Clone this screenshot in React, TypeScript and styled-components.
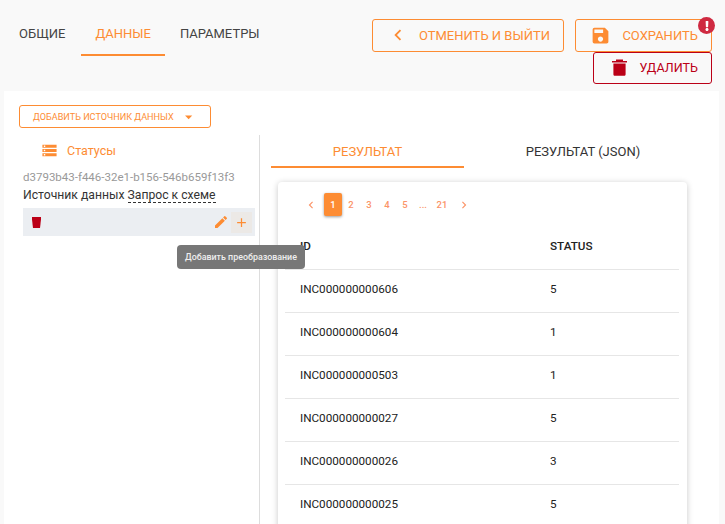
import React from "react";
import styled, { createGlobalStyle } from "styled-components";
import { MdAdd, MdArrowDropDown, MdChevronLeft, MdChevronRight, MdEdit, MdSave, MdStorage } from "react-icons/md";
import { FaExclamation } from "react-icons/fa";

const ORANGE = "#fd8c33";
const RED = "#bb0017";

const Global = createGlobalStyle`
    html, body { margin: 0; height: 524px; overflow: hidden; background: #f9f9f9; }
    body { font-family: Roboto, "Liberation Sans", sans-serif; color: #333; }
    * { box-sizing: border-box; }
`;

const Page = styled.div`
    width: 725px;
    height: 524px;
    overflow: hidden;
    display: flex;
    flex-direction: column;
`;

const Header = styled.header`
    height: 91px;
    flex: none;
    display: flex;
    justify-content: space-between;
    padding: 19px 13px 0 5px;
`;

const NavTabs = styled.nav`
    display: flex;
    gap: 1px;
    height: 37px;
`;

const NavTab = styled.div<{ $active?: boolean }>`
    padding: 6px 14px 0;
    height: 37px;
    font-size: 13px;
    line-height: 17px;
    color: ${(p) => (p.$active ? ORANGE : "#444")};
    border-bottom: 2px solid ${(p) => (p.$active ? ORANGE : "transparent")};

    &:first-child {
        padding-right: 15px;
    }
`;

const Actions = styled.div`
    width: 340px;
    display: flex;
    flex-wrap: wrap;
    justify-content: flex-end;
    align-content: flex-start;
    column-gap: 11px;
`;

const ActionButton = styled.button<{ $w: number; $danger?: boolean }>`
    position: relative;
    width: ${(p) => p.$w}px;
    height: 32.5px;
    padding: 0 13px 0 19px;
    display: flex;
    align-items: center;
    justify-content: space-between;
    font: 400 ${(p) => (p.$danger ? 12.6 : 13)}px Roboto, sans-serif;
    background: transparent;
    color: ${(p) => (p.$danger ? RED : ORANGE)};
    border: 1px solid ${(p) => (p.$danger ? RED : ORANGE)};
    border-radius: 3px;
    white-space: nowrap;
`;

const AlertBadge = styled.span`
    position: absolute;
    top: -3px;
    right: -4px;
    width: 17px;
    height: 17px;
    border-radius: 50%;
    background: #cf2a41;
    color: #fff;
    display: flex;
    align-items: center;
    justify-content: center;
    font-size: 10px;
`;

const Content = styled.main`
    flex: 1;
    margin: 0 6px 0 4px;
    background: #fff;
    padding: 14px 0 0 15px;
    min-height: 0;
`;

const AddSourceButton = styled.button`
    width: 192px;
    height: 23px;
    padding: 0 13px;
    display: flex;
    align-items: center;
    gap: 6px;
    font: 400 9.1px Roboto, sans-serif;
    color: ${ORANGE};
    background: #fff;
    border: 1px solid ${ORANGE};
    border-radius: 3px;
    white-space: nowrap;
`;

const Columns = styled.div`
    margin-top: 7px;
    display: flex;
`;

const LeftColumn = styled.section`
    position: relative;
    width: 241px;
    height: 400px;
    flex: none;
    padding: 0 4px;
    border-right: 1px solid #ddd;
`;

const SourceTitle = styled.div`
    height: 31px;
    padding-left: 18px;
    display: flex;
    align-items: center;
    gap: 9px;
    font-size: 12.5px;
    color: ${ORANGE};
`;

const Uuid = styled.div`
    margin-top: 4px;
    font-size: 11.5px;
    line-height: 14px;
    color: #999;
    white-space: nowrap;
`;

const SourceLine = styled.div`
    margin-top: 3px;
    height: 21px;
    font-size: 12.2px;
    line-height: 17px;
    color: #333;
    white-space: nowrap;
`;

const Dashed = styled.span`
    border-bottom: 1px dashed #333;
`;

const SourceRow = styled.div`
    position: relative;
    height: 28px;
    width: 232px;
    background: #ebeef2;
    display: flex;
    align-items: center;
    padding: 0 3px 0 9px;
`;

const RowIcons = styled.div`
    margin-left: auto;
    display: flex;
    align-items: center;
    gap: 2px;
    color: ${ORANGE};
`;

const PlusBox = styled.span`
    width: 21px;
    height: 21px;
    background: #ece9e6;
    display: flex;
    align-items: center;
    justify-content: center;
`;

const Tooltip = styled.div`
    position: absolute;
    top: 37px;
    left: 154px;
    width: 128px;
    height: 24px;
    border-radius: 4px;
    background: #777;
    color: #eee;
    font-size: 8.9px;
    font-weight: 500;
    line-height: 24px;
    text-align: center;
    white-space: nowrap;
    z-index: 2;
`;

const RightColumn = styled.section`
    flex: none;
    width: 442px;
    padding-left: 11px;
`;

const ResultTabs = styled.div`
    display: flex;
    height: 33px;
`;

const ResultTab = styled.div<{ $active?: boolean }>`
    width: ${(p) => (p.$active ? 193 : 238)}px;
    height: 33px;
    padding-top: 9px;
    text-align: center;
    font-size: 13px;
    line-height: 15px;
    color: ${(p) => (p.$active ? ORANGE : "#333")};
    border-bottom: 2px solid ${(p) => (p.$active ? ORANGE : "transparent")};
`;

const Card = styled.div`
    margin: 14px 0 0 7px;
    width: 409px;
    height: 400px;
    padding: 11px 8px 0 7px;
    border-radius: 4px;
    background: #fff;
    box-shadow: 0 1px 6px rgba(0, 0, 0, 0.22);
`;

const Pagination = styled.div`
    display: flex;
    align-items: center;
    height: 23px;
    padding-left: 17px;
    font-size: 9.5px;
    font-weight: 500;
    color: #fb9468;
`;

const PageItem = styled.span<{ $active?: boolean; $w?: number }>`
    width: ${(p) => p.$w ?? 18}px;
    height: 23px;
    display: flex;
    align-items: center;
    justify-content: center;
    border-radius: 2px;
    color: ${(p) => (p.$active ? "#fff" : "inherit")};
    background: ${(p) => (p.$active ? ORANGE : "transparent")};
    box-shadow: ${(p) => (p.$active ? "0 1px 3px rgba(0,0,0,.4)" : "none")};
`;

const Table = styled.div`
    margin-top: 11px;
`;

const Row = styled.div<{ $head?: boolean }>`
    height: 43px;
    padding: 0 0 4px 15px;
    display: grid;
    grid-template-columns: 250px 1fr;
    align-items: center;
    border-bottom: 1px solid #e6e6e6;
    font-size: 11.7px;
    font-weight: ${(p) => (p.$head ? 500 : 400)};
    color: #222;
`;

const TrashIcon: React.FC = () => (
    <svg width={15} height={17} viewBox="0 0 15 17" fill={RED} style={{ marginLeft: -1 }}>
        <path d="M0 2h15v1.6H0zM4 .4h7V2H4zM1.4 4.6h12.2v10.6c0 1-.7 1.6-1.6 1.6H3c-.9 0-1.6-.6-1.6-1.6z" />
    </svg>
);

const SmallTrashIcon: React.FC = () => (
    <svg width={9} height={11} viewBox="0 0 9 11" fill={RED}>
        <path d="M0 0h9v2.4L8 11H1L0 2.4z" />
    </svg>
);

const rows = [
    ["INC000000000606", "5"],
    ["INC000000000604", "1"],
    ["INC000000000503", "1"],
    ["INC000000000027", "5"],
    ["INC000000000026", "3"],
    ["INC000000000025", "5"],
];

const App: React.FC = () => (
    <Page>
        <Global />
        <Header>
            <NavTabs>
                <NavTab>ОБЩИЕ</NavTab>
                <NavTab $active>ДАННЫЕ</NavTab>
                <NavTab>ПАРАМЕТРЫ</NavTab>
            </NavTabs>
            <Actions>
                <ActionButton $w={192}>
                    <MdChevronLeft size={22} style={{ marginLeft: -5 }} />
                    ОТМЕНИТЬ И ВЫЙТИ
                </ActionButton>
                <ActionButton $w={137}>
                    <MdSave size={21} style={{ marginLeft: -5 }} />
                    СОХРАНИТЬ
                    <AlertBadge>
                        <FaExclamation />
                    </AlertBadge>
                </ActionButton>
                <ActionButton $w={119} $danger>
                    <TrashIcon />
                    УДАЛИТЬ
                </ActionButton>
            </Actions>
        </Header>
        <Content>
            <AddSourceButton>
                ДОБАВИТЬ ИСТОЧНИК ДАННЫХ
                <MdArrowDropDown size={18} />
            </AddSourceButton>
            <Columns>
                <LeftColumn>
                    <SourceTitle>
                        <MdStorage size={17} />
                        Статусы
                    </SourceTitle>
                    <Uuid>d3793b43-f446-32e1-b156-546b659f13f3</Uuid>
                    <SourceLine>
                        Источник данных <Dashed>Запрос к схеме</Dashed>
                    </SourceLine>
                    <SourceRow>
                        <SmallTrashIcon />
                        <RowIcons>
                            <MdEdit size={16} />
                            <PlusBox>
                                <MdAdd size={15} />
                            </PlusBox>
                        </RowIcons>
                        <Tooltip>Добавить преобразование</Tooltip>
                    </SourceRow>
                </LeftColumn>
                <RightColumn>
                    <ResultTabs>
                        <ResultTab $active>РЕЗУЛЬТАТ</ResultTab>
                        <ResultTab>РЕЗУЛЬТАТ (JSON)</ResultTab>
                    </ResultTabs>
                    <Card>
                        <Pagination>
                            <PageItem>
                                <MdChevronLeft size={14} />
                            </PageItem>
                            <PageItem $w={4} />
                            <PageItem $active>1</PageItem>
                            <PageItem>2</PageItem>
                            <PageItem>3</PageItem>
                            <PageItem>4</PageItem>
                            <PageItem>5</PageItem>
                            <PageItem>...</PageItem>
                            <PageItem $w={20}>21</PageItem>
                            <PageItem $w={24}>
                                <MdChevronRight size={14} />
                            </PageItem>
                        </Pagination>
                        <Table>
                            <Row $head>
                                <span>ID</span>
                                <span>STATUS</span>
                            </Row>
                            {rows.map(([id, status]) => (
                                <Row key={id}>
                                    <span>{id}</span>
                                    <span>{status}</span>
                                </Row>
                            ))}
                        </Table>
                    </Card>
                </RightColumn>
            </Columns>
        </Content>
    </Page>
);

export default App;
